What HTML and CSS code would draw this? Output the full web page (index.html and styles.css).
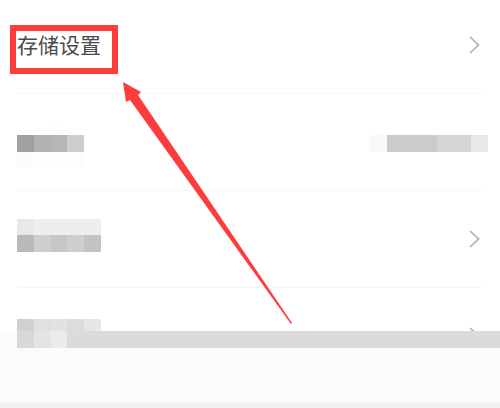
FILE: index.html
```html
<!DOCTYPE html>
<html>
<head>
    <meta charset="utf-8">
    <link rel="stylesheet" href="styles.css">
</head>
<body>
<div class="page">
    <div class="list">
        <div class="row row-first">
            <span class="title">存储设置</span>
            <svg class="chevron" viewBox="0 0 11 18"><path d="M1 1l8.5 8-8.5 8"/></svg>
        </div>
        <div class="row row-second">
            <div class="mosaic mosaic-left">
                <i class="f1"></i><i class="f1"></i><i class="f2"></i><i class="f1"></i>
                <i class="c1"></i><i class="c2"></i><i class="c3"></i><i class="c4"></i>
                <i class="f3"></i><i class="f2"></i><i class="f1"></i><i class="f2"></i>
            </div>
            <div class="value">
                <i class="v1"></i><i class="v2"></i><i class="v3"></i><i class="v4"></i>
            </div>
        </div>
        <div class="row row-third">
            <div class="mosaic mosaic-wide">
                <i class="l1"></i><i class="l2"></i><i class="l2"></i><i class="l2"></i><i class="l2"></i>
                <i class="m1"></i><i class="m2"></i><i class="m3"></i><i class="m2"></i><i class="m4"></i>
            </div>
            <svg class="chevron" viewBox="0 0 11 18"><path d="M1 1l8.5 8-8.5 8"/></svg>
        </div>
        <div class="row row-fourth">
            <div class="cells">
                <i class="p1"></i><i class="p2"></i><i class="p3"></i><i class="p4"></i><i class="p5"></i>
            </div>
            <svg class="chevron" viewBox="0 0 11 18"><path d="M1 1l8.5 8-8.5 8"/></svg>
        </div>
    </div>
    <div class="bar">
        <i class="b1"></i><i class="b2"></i><i class="b3"></i>
        <div class="bar-fill"></div>
    </div>
    <div class="footer"></div>
    <div class="strip"></div>

    <div class="red-box"></div>
    <svg class="arrow" viewBox="0 0 500 408">
        <polygon points="123,82 141,92 138,95 292,323 291,324 130,100 126,102"/>
    </svg>
</div>
</body>
</html>
```

FILE: styles.css
```css
* {
    box-sizing: border-box;
}
body {
    margin: 0;
    background-color: #fff;
    font-family: "Noto Sans CJK SC", "Liberation Sans", sans-serif;
}
.page {
    position: relative;
    width: 500px;
    height: 408px;
    overflow: hidden;
}
.list {
    height: 331px;
    overflow: hidden;
}
.row {
    display: flex;
    align-items: center;
    justify-content: space-between;
    margin: 0 17px;
    height: 97px;
    border-bottom: 1px solid #f7f7f7;
}
.row-first {
    height: 94px;
    padding-bottom: 3px;
    padding-right: 3px;
}
.row-third {
    padding-right: 3px;
}
.row-fourth {
    align-items: flex-start;
    padding-top: 31px;
    padding-right: 3px;
    border-bottom: none;
}
.row-fourth .chevron {
    margin-top: 8px;
}
.title {
    font-size: 21px;
    line-height: 28px;
    color: #4a4a4a;
    margin-top: -2px;
}
.chevron {
    width: 11px;
    height: 18px;
    fill: none;
    stroke: #b0b0b0;
    stroke-width: 1.7;
}

/* blurred out text */
.mosaic {
    display: grid;
    grid-template-columns: repeat(4, 16.8px);
}
.mosaic-left {
    grid-template-rows: 8px 17px 16px;
    margin-top: 10px;
}
.mosaic-wide {
    grid-template-columns: repeat(5, 16.8px);
    grid-template-rows: 16px 17px;
    margin-bottom: 7px;
}
.f1 { background-color: #fefefe; }
.f2 { background-color: #fdfdfd; }
.f3 { background-color: #fcfcfc; }
.c1 { background-color: #a0a0a0; }
.c2 { background-color: #b2b2b2; }
.c3 { background-color: #b6b6b6; }
.c4 { background-color: #cecece; }
.l1 { background-color: #e8e8e8; }
.l2 { background-color: #eeeeee; }
.m1 { background-color: #b9b9b9; }
.m2 { background-color: #cfcfcf; }
.m3 { background-color: #c6c6c6; }
.m4 { background-color: #c3c3c3; }

.value {
    display: flex;
    height: 17px;
    margin-top: 2px;
    margin-right: -5px;
}
.value i {
    display: block;
    height: 17px;
}
.v1 { width: 17px; background-color: #f8f8f8; }
.v2 { width: 50px; background-color: #cbcbcb; }
.v3 { width: 34px; background-color: #d5d5d5; }
.v4 { width: 17px; background-color: #e8e8e8; }

.cells {
    display: flex;
}
.cells i {
    display: block;
    width: 16.8px;
    height: 12px;
}
.p1 { background-color: #d0d0d0; }
.p2 { background-color: #e0e0e0; }
.p3 { background-color: #e2e2e2; }
.p4 { background-color: #dcdcdc; }
.p5 { background-color: #e6e6e6; }

.bar {
    display: flex;
    height: 17px;
    padding-left: 17px;
    background-color: #fbfbfb;
}
.bar i {
    display: block;
    width: 16.8px;
}
.b1 { background-color: #d8d8d8; }
.b2 { background-color: #e4e4e4; }
.b3 { background-color: #ebebeb; }
.bar-fill {
    flex: 1;
    background-color: #dbdbdb;
}
.footer {
    height: 55px;
    background-color: #fbfbfb;
}
.strip {
    height: 5px;
    background-color: #f1f1f1;
}

/* annotation on top of the screenshot */
.red-box {
    position: absolute;
    left: 10px;
    top: 25px;
    width: 108px;
    height: 49px;
    border: 6px solid #fd3c3c;
}
.arrow {
    position: absolute;
    left: 0;
    top: 0;
    width: 500px;
    height: 408px;
    fill: #fd3c3c;
}
```
